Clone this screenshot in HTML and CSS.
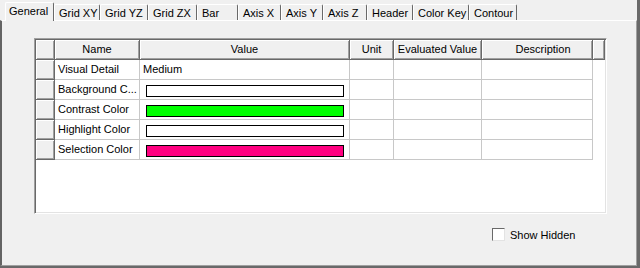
FILE: index.html
```html
<!DOCTYPE html>
<html>
<head>
<meta charset="utf-8">
<title>Chart Properties</title>
<link rel="stylesheet" href="styles.css">
</head>
<body>
<div class="frame">

   <div class="tab-strip">
      <div class="tab selected">General</div>
      <div class="tab">Grid XY</div>
      <div class="tab">Grid YZ</div>
      <div class="tab">Grid ZX</div>
      <div class="tab">Bar</div>
      <div class="tab">Axis X</div>
      <div class="tab">Axis Y</div>
      <div class="tab">Axis Z</div>
      <div class="tab">Header</div>
      <div class="tab">Color Key</div>
      <div class="tab">Contour</div>
   </div>

   <div class="page">
      <div class="prop-grid">
         <div class="hdr"></div>
         <div class="hdr">Name</div>
         <div class="hdr">Value</div>
         <div class="hdr">Unit</div>
         <div class="hdr">Evaluated Value</div>
         <div class="hdr desc">Description</div>
         <div class="hdr"></div>

         <div class="rowhdr"></div>
         <div class="cell">Visual Detail</div>
         <div class="cell">Medium</div>
         <div class="cell"></div><div class="cell"></div><div class="cell"></div>

         <div class="rowhdr"></div>
         <div class="cell">Background C...</div>
         <div class="cell"><span class="swatch white"></span></div>
         <div class="cell"></div><div class="cell"></div><div class="cell"></div>

         <div class="rowhdr"></div>
         <div class="cell">Contrast Color</div>
         <div class="cell"><span class="swatch green"></span></div>
         <div class="cell"></div><div class="cell"></div><div class="cell"></div>

         <div class="rowhdr"></div>
         <div class="cell">Highlight Color</div>
         <div class="cell"><span class="swatch white"></span></div>
         <div class="cell"></div><div class="cell"></div><div class="cell"></div>

         <div class="rowhdr"></div>
         <div class="cell">Selection Color</div>
         <div class="cell"><span class="swatch pink"></span></div>
         <div class="cell"></div><div class="cell"></div><div class="cell"></div>
      </div>

      <div class="options">
         <span class="checkbox"></span>
         <span class="check-label">Show Hidden</span>
      </div>
   </div>

</div>
</body>
</html>
```

FILE: styles.css
```css
/* window frame */
   html, body  {margin: 0; padding: 0; background-color: #f0f0f0}
   body        {font-family: "Liberation Sans", Arial, sans-serif; font-size: 11px; color: #000}
   .frame      {width: 640px; height: 268px; box-sizing: border-box;
                border-right: 3px solid #696969; border-bottom: 2px solid #696969;
                display: flex; flex-direction: column}

/* tabs */
   .tab-strip  {height: 20px; display: flex; align-items: flex-end; padding-left: 5px}
   .tab        {box-sizing: border-box; height: 16px; padding: 2px 0 0 4px; line-height: 13px;
                border-top: 1px solid #fff; border-left: 1px solid #fff; border-right: 1px solid #696969;
                border-radius: 2px 2px 0 0; background-color: #f0f0f0; white-space: nowrap}
   .tab.selected {height: 19px; margin-bottom: -1px; padding-left: 3px; position: relative; z-index: 1}
   .tab:nth-child(1)  {width: 49px}
   .tab:nth-child(2)  {width: 46px}
   .tab:nth-child(3)  {width: 48px}
   .tab:nth-child(4)  {width: 49px}
   .tab:nth-child(5)  {width: 41px}
   .tab:nth-child(6)  {width: 43px}
   .tab:nth-child(7)  {width: 42px}
   .tab:nth-child(8)  {width: 44px}
   .tab:nth-child(9)  {width: 46px}
   .tab:nth-child(10) {width: 56px}
   .tab:nth-child(11) {width: 48px}

/* tab page */
   .page       {flex: 1; box-sizing: border-box; border-top: 1px solid #fff;
                border-left: 2px solid #646464; border-right: 1px solid #a0a0a0;
                border-bottom: 1px solid #a0a0a0; display: flex; flex-direction: column}

/* property grid */
   .prop-grid  {width: 573px; height: 176px; box-sizing: border-box; margin: 17px 0 0 32px;
                padding: 1px; background-color: #fff;
                border-top: 1px solid #a0a0a0; border-left: 1px solid #a0a0a0;
                border-right: 1px solid #fff; border-bottom: 1px solid #fff;
                box-shadow: inset 1px 1px #696969, inset -1px -1px #e3e3e3;
                display: grid; grid-template-columns: 19px 85px 210px 44px 88px 111px 12px;
                grid-auto-rows: 20px; align-content: start}
   .hdr, .rowhdr {box-sizing: border-box; background-color: #f0f0f0;
                border-right: 1px solid #696969; border-bottom: 1px solid #696969;
                box-shadow: inset 1px 1px #fff, inset -1px -1px #a0a0a0;
                text-align: center; line-height: 19px; white-space: nowrap; overflow: hidden}
   .hdr.desc   {padding-left: 12px}
   .rowhdr     {grid-column: 1}
   .cell       {box-sizing: border-box; border-right: 1px solid #c8c8c8; border-bottom: 1px solid #c8c8c8;
                padding-left: 3px; line-height: 19px; white-space: nowrap; overflow: hidden}
   .swatch     {display: block; width: 198px; height: 12px; box-sizing: border-box;
                margin: 5px 0 0 3px; border: 1px solid #000}
   .swatch.white {background-color: #fff}
   .swatch.green {background-color: #00ff00}
   .swatch.pink  {background-color: #ff0080}

/* show hidden check box */
   .options    {display: flex; align-items: flex-start; margin-top: 14px; padding-left: 490px}
   .checkbox   {width: 13px; height: 13px; box-sizing: border-box; background-color: #fff;
                border: 1px solid; border-color: #696969 #e3e3e3 #e3e3e3 #696969}
   .check-label {margin-left: 5px; line-height: 13px; padding-top: 1px}
```
